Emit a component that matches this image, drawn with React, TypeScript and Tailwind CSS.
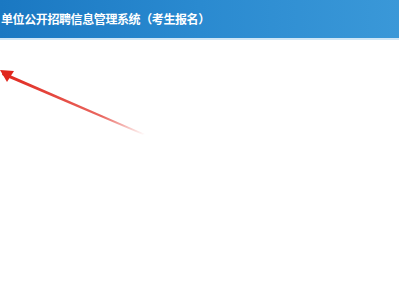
export default function App() {
  return (
    <div className="w-[399px] h-[300px] bg-white overflow-hidden relative font-['Noto_Sans_CJK_SC',sans-serif]">
      {/* 顶部标题栏 */}
      <header className="h-[40px] bg-gradient-to-r from-[#1a78c2] via-[#2a8ad0] to-[#3a98d8] flex items-center border-b-2 border-[#cfe6f6]">
        <h1 className="text-white text-[12px] font-bold tracking-[-0.4px] whitespace-nowrap pl-[1px]">
          单位公开招聘信息管理系统（考生报名）
        </h1>
      </header>

      {/* 红色箭头 */}
      <svg className="absolute left-0 top-[60px]" width="160" height="85" viewBox="0 0 160 85">
        <defs>
          <linearGradient id="fade" x1="0" y1="0" x2="1" y2="1">
            <stop offset="0%" stopColor="#e0261c" stopOpacity="1" />
            <stop offset="70%" stopColor="#e0261c" stopOpacity="0.7" />
            <stop offset="100%" stopColor="#e0261c" stopOpacity="0" />
          </linearGradient>
        </defs>
        <polygon points="3,12 145,74 143,75 2,15" fill="url(#fade)" />
        <polygon points="0,10 14,11 7,22" fill="#e0261c" />
      </svg>
    </div>
  );
}
